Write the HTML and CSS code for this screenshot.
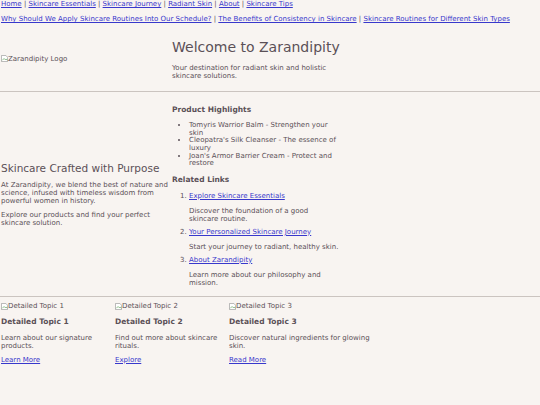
FILE: index.html
```html
<!DOCTYPE html>
<html lang="en">
<head>
    <title>Zarandipity - Skincare Crafted with Purpose</title>
    <meta charset="utf-8">
    <meta name="viewport" content="width=device-width, initial-scale=1">
    <link rel="stylesheet" href="styles.css">
</head>
<body>
    <nav class="top-nav">
        <div class="nav-row">
            <a href="#">Home</a> | <a href="#">Skincare Essentials</a> | <a href="#">Skincare Journey</a> | <a href="#">Radiant Skin</a> | <a href="#">About</a> | <a href="#">Skincare Tips</a>
        </div>
        <div class="nav-row">
            <a href="#">Why Should We Apply Skincare Routines Into Our Schedule?</a> | <a href="#">The Benefits of Consistency in Skincare</a> | <a href="#">Skincare Routines for Different Skin Types</a>
        </div>
    </nav>

    <header class="site-header">
        <div class="col-left">
            <span class="img-alt"><svg class="broken" viewBox="0 0 8 8"><path d="M0.5 0.5h5l2 2v5h-7z" fill="#fff" stroke="#9a9a9a" stroke-width="0.8"/><path d="M1.5 6l2-2 1.5 1.5 1-1 1 1.5" fill="none" stroke="#5ea25a" stroke-width="0.8"/></svg>Zarandipity Logo</span>
        </div>
        <div class="col-right">
            <h1>Welcome to Zarandipity</h1>
            <p>Your destination for radiant skin and holistic skincare solutions.</p>
        </div>
    </header>

    <hr>

    <main class="intro">
        <section class="col-left">
            <h2>Skincare Crafted with Purpose</h2>
            <p>At Zarandipity, we blend the best of nature and science, infused with timeless wisdom from powerful women in history.</p>
            <p>Explore our products and find your perfect skincare solution.</p>
        </section>
        <aside class="col-right">
            <h3>Product Highlights</h3>
            <ul>
                <li>Tomyris Warrior Balm - Strengthen your skin</li>
                <li>Cleopatra's Silk Cleanser - The essence of luxury</li>
                <li>Joan's Armor Barrier Cream - Protect and restore</li>
            </ul>
            <h3>Related Links</h3>
            <ol>
                <li><a href="#">Explore Skincare Essentials</a><p>Discover the foundation of a good skincare routine.</p></li>
                <li><a href="#">Your Personalized Skincare Journey</a><p>Start your journey to radiant, healthy skin.</p></li>
                <li><a href="#">About Zarandipity</a><p>Learn more about our philosophy and mission.</p></li>
            </ol>
        </aside>
    </main>

    <hr>

    <div class="topics">
        <div class="topic">
            <span class="img-alt"><svg class="broken" viewBox="0 0 8 8"><path d="M0.5 0.5h5l2 2v5h-7z" fill="#fff" stroke="#9a9a9a" stroke-width="0.8"/><path d="M1.5 6l2-2 1.5 1.5 1-1 1 1.5" fill="none" stroke="#5ea25a" stroke-width="0.8"/></svg>Detailed Topic 1</span>
            <h3>Detailed Topic 1</h3>
            <p>Learn about our signature products.</p>
            <a href="#">Learn More</a>
        </div>
        <div class="topic">
            <span class="img-alt"><svg class="broken" viewBox="0 0 8 8"><path d="M0.5 0.5h5l2 2v5h-7z" fill="#fff" stroke="#9a9a9a" stroke-width="0.8"/><path d="M1.5 6l2-2 1.5 1.5 1-1 1 1.5" fill="none" stroke="#5ea25a" stroke-width="0.8"/></svg>Detailed Topic 2</span>
            <h3>Detailed Topic 2</h3>
            <p>Find out more about skincare rituals.</p>
            <a href="#">Explore</a>
        </div>
        <div class="topic wide">
            <span class="img-alt"><svg class="broken" viewBox="0 0 8 8"><path d="M0.5 0.5h5l2 2v5h-7z" fill="#fff" stroke="#9a9a9a" stroke-width="0.8"/><path d="M1.5 6l2-2 1.5 1.5 1-1 1 1.5" fill="none" stroke="#5ea25a" stroke-width="0.8"/></svg>Detailed Topic 3</span>
            <h3>Detailed Topic 3</h3>
            <p>Discover natural ingredients for glowing skin.</p>
            <a href="#">Read More</a>
        </div>
    </div>
</body>
</html>
```

FILE: styles.css
```css
:root {
    --bg-color: #f8f4f1;
    --text-color: #5b5057;
    --link-color: #3838cc;
    --rule-color: #cbc4c0;
}

* {
    margin: 0;
    padding: 0;
    box-sizing: border-box;
}

body {
    font-family: "DejaVu Sans", sans-serif;
    font-size: 7px;
    line-height: 1.15;
    color: var(--text-color);
    background-color: var(--bg-color);
    padding: 0 1px;
}

a {
    color: var(--link-color);
}

.nav-row {
    height: 8px;
    margin-bottom: 7px;
    white-space: nowrap;
}

.site-header,
.intro {
    display: flex;
    align-items: center;
}

.site-header {
    padding: 9px 0 11px;
}

.site-header p {
    margin-bottom: 0;
}

.col-left {
    width: 171px;
    flex-shrink: 0;
}

.col-right {
    width: 170px;
}

.img-alt {
    display: inline-flex;
    align-items: center;
}

.broken {
    width: 7px;
    height: 7px;
}

h1 {
    font-size: 14px;
    font-weight: 400;
    white-space: nowrap;
    margin-bottom: 9px;
}

h2 {
    font-size: 10.5px;
    font-weight: 400;
    margin-bottom: 6px;
}

h3 {
    font-size: 7.5px;
    font-weight: 600;
    margin-bottom: 7px;
}

p {
    margin-bottom: 6px;
}

hr {
    border: none;
    border-top: 1px solid var(--rule-color);
    margin: 0 -1px;
}

.intro {
    padding: 14px 0 1px;
}

.intro .col-left {
    padding-bottom: 6px;
}

.intro ul,
.intro ol {
    margin-left: 17px;
    margin-bottom: 8px;
}

.intro ul {
    line-height: 7.7px;
}

.intro ol li {
    margin-bottom: 5px;
}

.intro ol p {
    max-width: 150px;
    margin: 7px 0 0;
}

.topics {
    display: flex;
    padding-top: 5px;
}

.topic {
    width: 114px;
    padding-right: 4px;
}

.topic.wide {
    width: 145px;
}

.topic .img-alt {
    margin-bottom: 8px;
}

.topic h3 {
    margin-bottom: 7px;
}

.topic p {
    margin-bottom: 6px;
}
```
